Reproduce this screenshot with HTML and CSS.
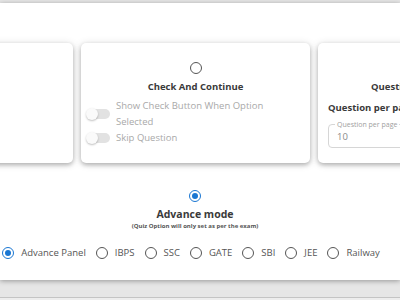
FILE: index.html
```html
<!DOCTYPE html>
<html>
<head>
<meta charset="utf-8">
<link rel="stylesheet" href="styles.css">
</head>
<body>
<div class="panel">
  <div class="cards">
    <div class="card"></div>
    <div class="card card-center">
      <span class="radio"></span>
      <div class="title">Check And Continue</div>
      <div class="toggles">
        <div class="toggle-row">
          <span class="switch"><span class="thumb"></span></span>
          <span class="toggle-label">Show Check Button When Option<br>Selected</span>
        </div>
        <div class="toggle-row">
          <span class="switch"><span class="thumb"></span></span>
          <span class="toggle-label">Skip Question</span>
        </div>
      </div>
    </div>
    <div class="card card-right">
      <div class="right-head">
        <span class="radio"></span>
        <div class="title">Question Per Page Setting</div>
      </div>
      <div class="sub-title">Question per page</div>
      <div class="field">
        <span class="field-label">Question per page</span>
        <span class="field-value">10</span>
      </div>
    </div>
  </div>
  <div class="mode">
    <span class="radio checked"></span>
    <div class="mode-title">Advance mode</div>
    <div class="mode-note">(Quiz Option will only set as per the exam)</div>
    <div class="options">
      <label class="option"><span class="radio checked"></span>Advance Panel</label>
      <label class="option"><span class="radio"></span>IBPS</label>
      <label class="option"><span class="radio"></span>SSC</label>
      <label class="option"><span class="radio"></span>GATE</label>
      <label class="option"><span class="radio"></span>SBI</label>
      <label class="option"><span class="radio"></span>JEE</label>
      <label class="option"><span class="radio"></span>Railway</label>
    </div>
  </div>
</div>
<div class="below"></div>
</body>
</html>
```
FILE: styles.css
```css
* { box-sizing: border-box; }
html, body { margin: 0; padding: 0; }
body {
  width: 400px;
  height: 300px;
  overflow: hidden;
  background: #e6e6e6;
  font-family: "Open Sans", "Noto Sans", sans-serif;
  color: #3a3a3a;
}
.panel {
  margin-top: 3px;
  height: 277px;
  background: #fff;
  box-shadow: 0 1px 5px rgba(0,0,0,0.35);
  padding-top: 40px;
  overflow: hidden;
  position: relative;
}
.cards {
  display: flex;
  gap: 8px;
  margin-left: -156px;
}
.card {
  flex: 0 0 229px;
  height: 120px;
  background: #fff;
  border-radius: 5px;
  box-shadow: 0 2px 4px rgba(0,0,0,0.24), 0 1px 9px rgba(0,0,0,0.14);
}
.card-center {
  display: flex;
  flex-direction: column;
  align-items: center;
  padding-top: 19px;
}
.radio {
  display: inline-block;
  width: 12px;
  height: 12px;
  border-radius: 50%;
  border: 1.5px solid #555;
  flex: 0 0 auto;
  position: relative;
}
.radio.checked { border-color: #1976d2; }
.radio.checked::after {
  content: "";
  position: absolute;
  left: 1.5px; top: 1.5px;
  width: 6px; height: 6px;
  border-radius: 50%;
  background: #1976d2;
}
.title {
  margin-top: 6px;
  font-size: 9.5px;
  font-weight: 700;
  line-height: 14px;
  color: #3a3a3a;
  white-space: nowrap;
}
.toggles {
  align-self: stretch;
  padding-left: 6px;
  margin-top: 4px;
  display: flex;
  flex-direction: column;
  gap: 1px;
}
.toggle-row {
  display: flex;
  align-items: center;
  gap: 6px;
}
.switch {
  width: 23px;
  height: 10px;
  border-radius: 5px;
  background: #e2e2e2;
  position: relative;
  flex: 0 0 auto;
}
.thumb {
  position: absolute;
  left: -1px; top: -1px;
  width: 12px; height: 12px;
  border-radius: 50%;
  background: #fafafa;
  box-shadow: 0 1px 2px rgba(0,0,0,0.25);
}
.toggle-label {
  font-size: 9.5px;
  line-height: 15.5px;
  color: #a9a9a9;
}
.card-right {
  padding: 19px 10px 0;
  display: flex;
  flex-direction: column;
}
.right-head {
  display: flex;
  flex-direction: column;
  align-items: center;
}
.sub-title {
  margin-top: 7px;
  font-size: 9.5px;
  font-weight: 700;
  line-height: 14px;
  color: #3a3a3a;
}
.field {
  margin-top: 9px;
  height: 24px;
  border: 1px solid #d6d6d6;
  border-radius: 4px;
  position: relative;
  display: flex;
  align-items: center;
  padding-left: 8px;
}
.field-label {
  position: absolute;
  left: 6px;
  top: -5px;
  padding: 0 2px;
  background: #fff;
  font-size: 7px;
  line-height: 9px;
  color: #a0a0a0;
}
.field-value {
  font-size: 9.5px;
  color: #8a8a8a;
  padding-top: 1px;
}
.mode {
  margin-top: 27px;
  display: flex;
  flex-direction: column;
  align-items: center;
  padding-right: 10px;
}
.mode-title {
  margin-top: 5px;
  font-size: 10.5px;
  font-weight: 700;
  line-height: 14px;
  color: #3a3a3a;
}
.mode-note {
  margin-top: 1px;
  font-size: 6px;
  font-weight: 700;
  line-height: 9px;
  color: #555;
}
.options {
  margin-top: 15px;
  display: flex;
  gap: 10px;
  white-space: nowrap;
  margin-left: -8px;
}
.option {
  display: flex;
  align-items: center;
  gap: 7px;
  font-size: 9.5px;
  line-height: 14px;
  color: #555;
}
.below {
  margin-top: 17px;
  border-top: 1px solid #c4c4c4;
  height: 3px;
  background: #ededed;
}
```
